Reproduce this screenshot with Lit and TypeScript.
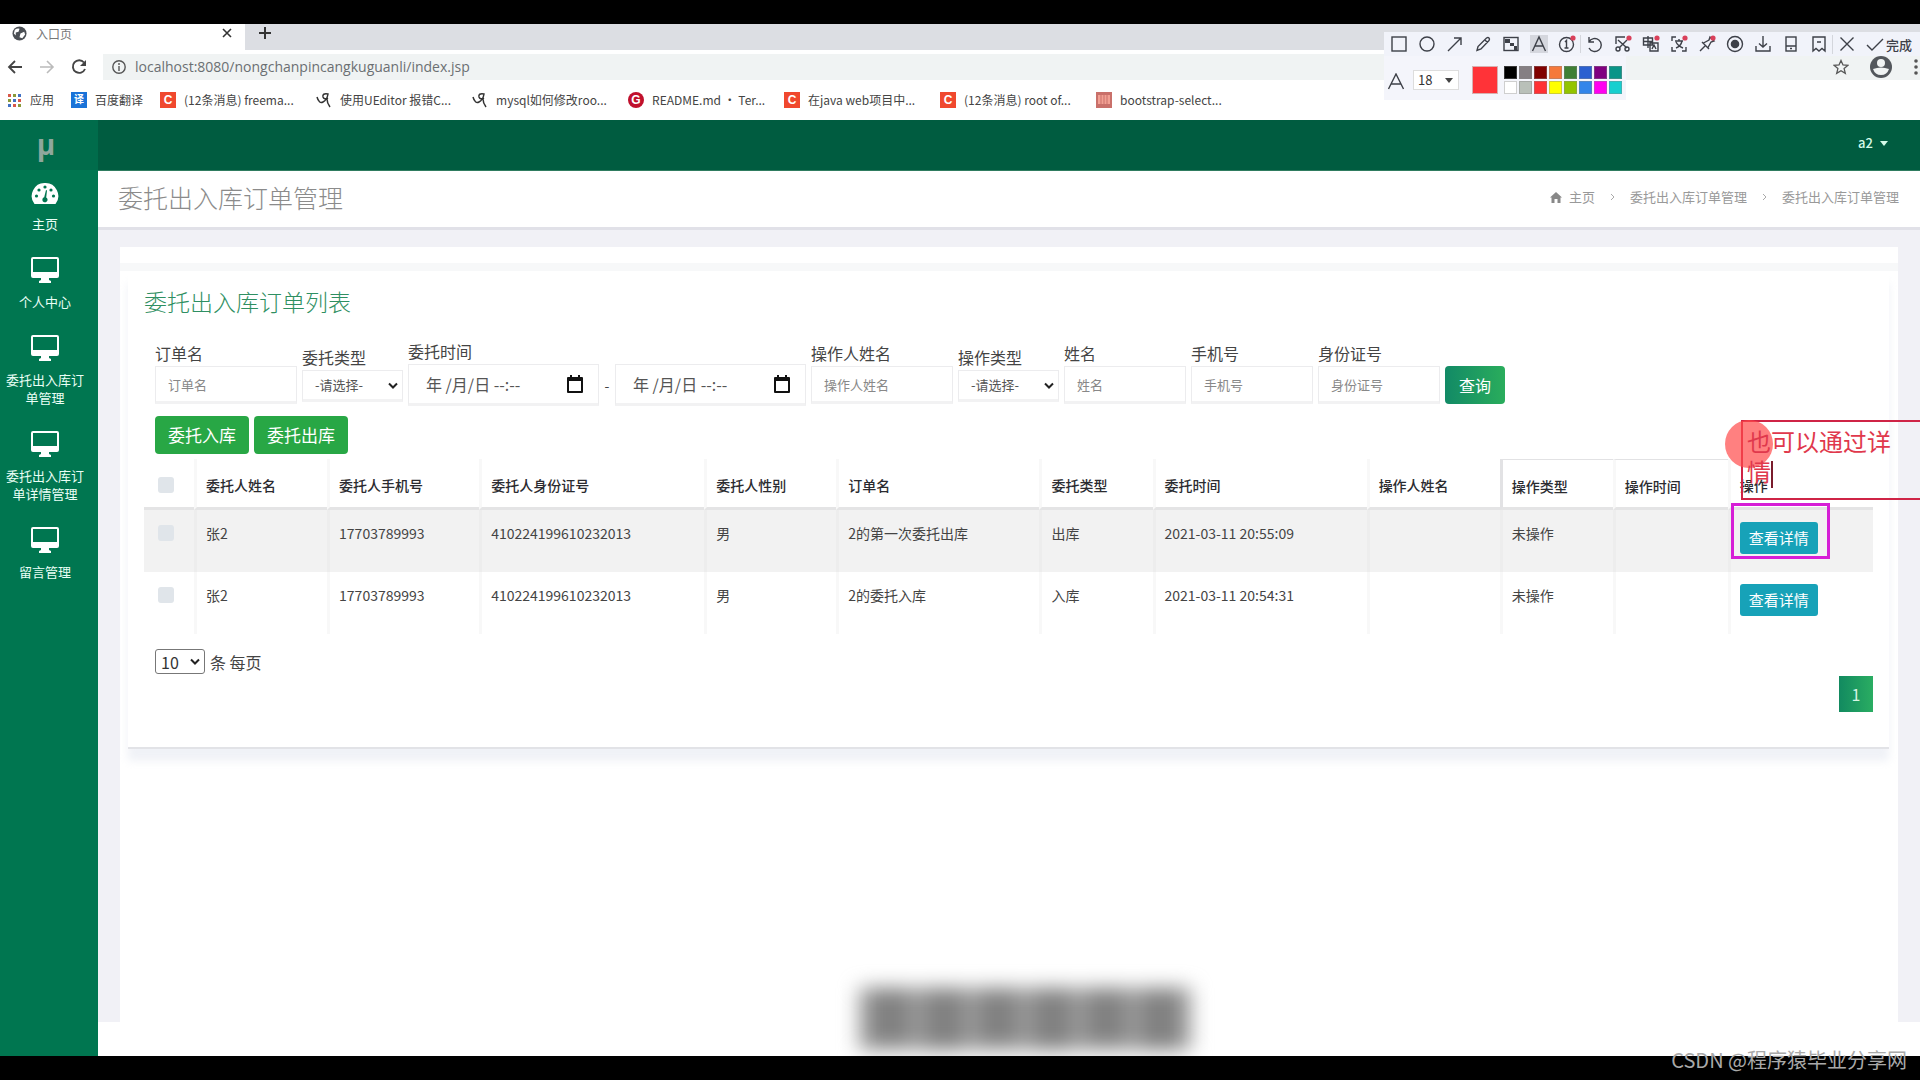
import { LitElement, html, css, svg, nothing } from "lit";
import { customElement } from "lit/decorators.js";
import { classMap } from "lit/directives/class-map.js";

const stroke = (body: unknown, cls = "ico") =>
  html`<svg class=${cls} viewBox="0 0 18 18" fill="none" stroke="currentColor" stroke-width="1.4" aria-hidden="true">${body}</svg>`;
const dot = svg`<circle cx="15" cy="3" r="2.6" fill="#d9405a" stroke="none"/>`;

const drawTools = [
  { name: "矩形", body: svg`<rect x="2" y="2" width="14" height="14"/>` },
  { name: "椭圆", body: svg`<circle cx="9" cy="9" r="7"/>` },
  { name: "箭头", body: svg`<path d="M2 16 15 3M8 3h7v7"/>` },
  { name: "画笔", body: svg`<path d="M3 15.500l1-4L12.500 3q1.500-1 2.500 0t0 2.500L7 14zM11 5l2.500 2.500"/>` },
  { name: "马赛克", body: svg`<rect x="2" y="2.500" width="14" height="13"/><path d="M3 4h5v4H3zM8 8h4v3H8zM12 11h3v4h-3z" fill="currentColor" stroke="none"/>` },
  { name: "文字", on: true, body: svg`<path d="M2.500 16 9 2l6.500 14M5 11h8"/>` },
  { name: "序号", body: svg`<circle cx="8.500" cy="9.500" r="7"/><path d="M7 7l1.500-1.500V13M6.500 13h4"/>${dot}` },
];
const editTools = [
  { name: "撤销", body: svg`<path d="M3 2v5h5M3 7a6.500 6.500 0 1 1 0 6"/>` },
  { name: "裁剪", body: svg`<path d="M2 9V2h9M4 5l9 8M13 5l-8 8"/><circle cx="4" cy="14" r="2"/><circle cx="13" cy="14" r="2"/>${dot}` },
  { name: "翻译", body: svg`<path d="M1.500 3h9v7h-9zM1.500 6.500h9M6 1v12M8 8h8v8H8zM10 14l2-4 2 4"/>${dot}` },
  { name: "文字识别", body: svg`<path d="M2 6V2h4M2 12v4h4M16 12v4h-4M5 6h8M9 4v2M6 13q5-2 6-7M6 7q2 4 7 6"/>${dot}` },
  { name: "钉住", body: svg`<path d="M2 16l5-5M4 7l7 7M5.500 8 11 5l1-3 4 4-3 1-3 5.500"/>${dot}` },
  { name: "录制", body: svg`<circle cx="9" cy="9" r="7.500"/><circle cx="9" cy="9" r="3.600" fill="currentColor"/>` },
  { name: "保存", body: svg`<path d="M9 1v11M5 8.500 9 12l4-3.500M2 11v5h14v-5"/>` },
  { name: "手机", body: svg`<rect x="4" y="2" width="10" height="14"/><path d="M4 11h10M8 13.500h2"/>` },
  { name: "收藏", body: svg`<path d="M3 2h12v14l-3-2.500L9 16l-3-2.500L3 16zM7 7h4"/>` },
];
const palette = [
  "#000000", "#857f83", "#800000", "#f5793b", "#3f7f35", "#2b5fd0", "#800080", "#0a9488",
  "#ffffff", "#b9c0b9", "#ff3034", "#ffff00", "#93c400", "#3385ea", "#ff00f0", "#17cfcf",
];

const bookmarks = [
  { kind: "apps", mark: "", text: "应用" },
  { kind: "blue", mark: "译", text: "百度翻译" },
  { kind: "csdn", mark: "C", text: "(12条消息) freema..." },
  { kind: "plain", mark: "", text: "使用UEditor 报错C..." },
  { kind: "plain", mark: "", text: "mysql如何修改roo..." },
  { kind: "gitee", mark: "G", text: "README.md · Ter..." },
  { kind: "csdn", mark: "C", text: "在java web项目中..." },
  { kind: "csdn", mark: "C", text: "(12条消息) root of..." },
  { kind: "book", mark: "", text: "bootstrap-select..." },
];

const menu = ["个人中心", "委托出入库订单管理", "委托出入库订单详情管理", "留言管理"];

const columns = [
  { title: "", w: 50 },
  { title: "委托人姓名", w: 133 },
  { title: "委托人手机号", w: 152 },
  { title: "委托人身份证号", w: 225 },
  { title: "委托人性别", w: 132 },
  { title: "订单名", w: 203 },
  { title: "委托类型", w: 113 },
  { title: "委托时间", w: 214 },
  { title: "操作人姓名", w: 133 },
  { title: "操作类型", w: 113 },
  { title: "操作时间", w: 115 },
  { title: "操作", w: 145 },
];
const totalWidth = columns.reduce((sum, c) => sum + c.w, 0);
const rows = [
  ["张2", "17703789993", "410224199610232013", "男", "2的第一次委托出库", "出库", "2021-03-11 20:55:09", "", "未操作", ""],
  ["张2", "17703789993", "410224199610232013", "男", "2的委托入库", "入库", "2021-03-11 20:54:31", "", "未操作", ""],
];

@customElement("browser-chrome")
class BrowserChrome extends LitElement {
  static styles = css`
    :host { display: block; height: 96px; background: #fff; color: #444; font-size: 12px; }
    a { color: inherit; text-decoration: none; }
    button { border: 0; padding: 0; background: none; color: inherit; font: inherit; display: flex; }
    svg { display: block; }
    .tabs { display: flex; height: 26px; background: #dcdee3; }
    .tab { display: flex; align-items: center; gap: 9px; width: 245px; box-sizing: border-box; padding: 0 13px 8px 12px; background: #fff; color: #777; }
    .tab span { flex: 1; }
    .plus { align-items: center; padding: 0 14px 8px; color: #333; }
    .address { display: flex; align-items: center; height: 30px; padding: 2px 0 0 7px; gap: 16px; }
    .omni { flex: 1; display: flex; align-items: center; gap: 9px; height: 26px; padding: 0 0 0 9px; background: #f0f3f3; }
    .omni input { flex: 1; border: 0; padding: 0; outline: 0; background: none; font: 14px/20px "Open Sans", "Noto Sans CJK SC", sans-serif; color: #6b6f72; }
    .right { display: flex; align-items: center; gap: 20px; color: #555; }
    .dim { color: #bbb; }
    .marks { display: flex; gap: 17px; height: 36px; align-items: center; padding: 0 6px; }
    .mark { display: flex; align-items: center; gap: 8px; white-space: nowrap; line-height: 20px; }
    .mark:nth-child(n + 3) span { width: 115px; }
    .badge { width: 16px; height: 16px; font: bold 12px/16px "Liberation Sans", "Noto Sans CJK SC", sans-serif; text-align: center; color: #fff; }
    .blue { background: #1a73d8; font-size: 10px; }
    .csdn { background: #f0482e; }
    .gitee { background: #c0102c; border-radius: 50%; }
  `;
  private icon(b: { kind: string; mark: string }) {
    if (b.kind === "apps")
      return html`<svg width="16" height="16" viewBox="0 0 16 16">${[2, 7, 12].map((y, r) => [2, 7, 12].map((x, c) => svg`<rect x=${x} y=${y} width="3" height="3" fill=${["#d9584a", "#8a9a3a", "#4272c4"][(r + c) % 3]}/>`))}</svg>`;
    if (b.kind === "plain")
      return html`<svg width="16" height="16" viewBox="0 0 16 16" fill="none" stroke="#333" stroke-width="1.5"><path d="M1 5q2 7 6 5 4-2 5-8-6-1-5 3 1 3 5 1M11 7q0 4 3 8"/></svg>`;
    if (b.kind === "book")
      return html`<svg width="16" height="16" viewBox="0 0 16 16"><rect width="16" height="16" fill="#c9706a"/><path d="M2 3h12v9H2z" fill="#f2a093"/><path d="M5 3v9M8 3v9M11 3v9" stroke="#c9706a"/></svg>`;
    return html`<b class="badge ${b.kind}">${b.mark}</b>`;
  }
  render() {
    return html`
      <div class="tabs">
        <div class="tab">
          <svg width="15" height="15" viewBox="0 0 16 16"><circle cx="8" cy="8" r="7.500" fill="#4b4f54"/><path d="M3 4q3-2 5-1l-1 3-3 1v3L2 8zM9 8l4-2 1 3-3 4-3-1z" fill="#fff"/></svg>
          <span>入口页</span>
          <button aria-label="关闭标签页"><svg width="10" height="10" viewBox="0 0 10 10" stroke="#333" stroke-width="1.600"><path d="M1 1l8 8M9 1 1 9"/></svg></button>
        </div>
        <button class="plus" aria-label="新标签页"><svg width="12" height="12" viewBox="0 0 12 12" stroke="currentColor" stroke-width="2"><path d="M6 0v12M0 6h12"/></svg></button>
      </div>
      <div class="address">
        <button aria-label="后退"><svg width="16" height="16" viewBox="0 0 16 16" fill="none" stroke="#444" stroke-width="1.800"><path d="M15 8H2M8 2 2 8l6 6"/></svg></button>
        <button class="dim" aria-label="前进"><svg width="16" height="16" viewBox="0 0 16 16" fill="none" stroke="currentColor" stroke-width="1.600"><path d="M1 8h13M8 2l6 6-6 6"/></svg></button>
        <button aria-label="刷新"><svg width="16" height="16" viewBox="0 0 16 16" fill="none" stroke="#444" stroke-width="1.900"><path d="M14 10a6.300 6.300 0 1 1-1-6.500"/><path d="M15 1v6H9z" fill="#444" stroke="none"/></svg></button>
        <div class="omni">
          <svg width="14" height="14" viewBox="0 0 14 14" fill="none" stroke="#555" stroke-width="1.400"><circle cx="7" cy="7" r="6.200"/><path d="M7 6v5M7 3v2"/></svg>
          <input aria-label="网址" value="localhost:8080/nongchanpincangkuguanli/index.jsp" />
          <div class="right">
            <button aria-label="收藏此页"><svg width="16" height="16" viewBox="0 0 16 16" fill="none" stroke="#555" stroke-width="1.300"><path d="M8 1.500l2 4.500 4.800.4-3.700 3.200 1.200 4.800L8 11.800l-4.300 2.600 1.200-4.800L1.200 6.400 6 6z"/></svg></button>
            <button aria-label="用户"><svg width="24" height="24" viewBox="0 0 24 24"><circle cx="12" cy="12" r="11" fill="#53575c"/><circle cx="12" cy="8" r="4" fill="#f0f3f3"/><path d="M4 14q8-3 16 0-2 6-8 6t-8-6z" fill="#f0f3f3"/></svg></button>
            <button aria-label="菜单"><svg width="7" height="18" viewBox="0 0 7 18" fill="#555"><circle cx="3" cy="3" r="1.800"/><circle cx="3" cy="9" r="1.800"/><circle cx="3" cy="15" r="1.800"/></svg></button>
          </div>
        </div>
      </div>
      <nav class="marks">
        ${bookmarks.map((b) => html`<a class="mark" href="#">${this.icon(b)}<span>${b.text}</span></a>`)}
      </nav>`;
  }
}

@customElement("capture-toolbar")
class CaptureToolbar extends LitElement {
  static styles = css`
    :host { display: block; color: #3d4048; font-size: 13px; }
    button { border: 0; padding: 0; background: none; color: inherit; font: inherit; display: flex; align-items: center; gap: 2px; }
    .ico { display: block; width: 18px; height: 18px; }
    .on { background: #d5d7de; }
    .done { font-weight: 500; }
    .top { display: flex; align-items: center; height: 24px; padding: 0 7px 0 6px; background: #f1f3fa; }
    .group { display: flex; gap: 10px; }
    .group + .group { border-left: 1px solid #d4d6dc; margin-left: 4px; padding-left: 5px; }
    .bottom { display: flex; align-items: center; width: 242px; height: 44px; box-sizing: border-box; padding: 4px 4px 0 3px; background: #f4f5fb; }
    .letter { margin-top: 3px; }
    select { appearance: none; width: 46px; height: 20px; border: 1px solid #ddd; margin: 0 13px 0 8px; padding: 0 4px; font: 13px/18px "Noto Sans CJK SC", sans-serif; color: #333; background: #fff; }
    .size { display: flex; align-items: center; position: relative; }
    .size svg { position: absolute; right: 19px; pointer-events: none; }
    .current { width: 26px; height: 28px; box-sizing: border-box; background: #ff3338; border: 1px solid #d8b0b0; margin-right: 6px; }
    .palette { display: grid; grid-template-columns: repeat(8, 13px); gap: 2px; }
    .swatch { width: 13px; height: 13px; border: 1px solid #8886; box-sizing: border-box; }
  `;
  render() {
    const tool = (t: any) => html`<button aria-label=${t.name} class=${classMap({ on: !!t.on })}>${stroke(t.body)}</button>`;
    return html`
      <div class="top">
        <div class="group">${drawTools.map(tool)}</div>
        <div class="group">${editTools.map(tool)}</div>
        <div class="group">
          ${tool({ name: "取消", body: svg`<path d="M2.500 2.500l13 13M15.500 2.500l-13 13"/>` })}
          <button class="done">${stroke(svg`<path d="M1 10l5 5L17 4"/>`)}完成</button>
        </div>
      </div>
      <div class="bottom">
        ${stroke(svg`<path d="M1.500 16 9 1l7.500 15M4.500 11h9"/>`, "ico letter")}
        <div class="size">
          <select aria-label="字号"><option>18</option></select>
          <svg width="8" height="5" viewBox="0 0 10 6"><path d="M0 0h10L5 6z" fill="#444"/></svg>
        </div>
        <button class="current" aria-label="当前颜色"></button>
        <div class="palette">${palette.map((c) => html`<button class="swatch" aria-label=${c} style="background:${c}"></button>`)}</div>
      </div>`;
  }
}

@customElement("side-menu")
class SideMenu extends LitElement {
  static styles = css`
    :host { display: block; width: 98px; flex: none; background: #007650; color: #fff; }
    .logo { height: 50px; box-sizing: border-box; padding-right: 6px; background: #006c4b; color: #8fa79c; text-align: center; font: bold 28px/48px "Open Sans", sans-serif; }
    nav { display: flex; flex-direction: column; gap: 24px; padding: 13px 10px 0 2px; }
    a { display: flex; flex-direction: column; align-items: center; gap: 10px; color: #eafff6; text-decoration: none; font-size: 13px; line-height: 18px; text-align: center; }
    svg { display: block; }
  `;
  render() {
    return html`
      <div class="logo">μ</div>
      <nav>
        <a href="#">
          <svg width="28" height="22" viewBox="0 0 28 22"><path d="M14 0A13 13 0 0 0 3.500 21h21A13 13 0 0 0 14 0z" fill="#fff"/><g fill="#007650"><circle cx="5.500" cy="13" r="1.600"/><circle cx="8" cy="7" r="1.600"/><circle cx="14" cy="4" r="1.600"/><circle cx="20" cy="7" r="1.600"/><circle cx="22.500" cy="13" r="1.600"/><path d="M15 7l1 .5-.8 7a2.600 2.600 0 1 1-2-.2z"/></g></svg>
          主页
        </a>
        ${menu.map((m) => html`<a href="#">
          <svg width="28" height="26" viewBox="0 0 28 26"><path d="M0 2q0-2 2-2h24q2 0 2 2v17q0 2-2 2h-8v2l2 1v2H8v-2l2-1v-2H2q-2 0-2-2zM2 2v13h24V2z" fill="#fff" fill-rule="evenodd"/></svg>
          ${m}</a>`)}
      </nav>`;
  }
}

@customElement("order-panel")
class OrderPanel extends LitElement {
  static styles = css`
    :host { display: block; background: #fff; margin: 0 9px 0 8px; padding: 14px 16px 35px; border-bottom: 2px solid #e2e3e7; box-shadow: 0 12px 8px #e6eaf299; }
    h2 { margin: 0; font-weight: 300; font-size: 23px; line-height: 32px; color: #2f8f62; }
    label { display: block; font-size: 16px; line-height: 24px; }
    form { display: flex; align-items: flex-end; flex-wrap: wrap; margin-top: 22px; padding: 0 11px; color: #444; }
    .field { margin: 0 5px 3px 0; }
    .field label { margin-bottom: 1px; }
    .field.pick { margin-bottom: 5px; }
    .field.time { margin-bottom: 1px; }
    .text, .pick select, .when { box-sizing: border-box; border: 1px solid #ececee; border-bottom: 3px solid #f2f2f3; background: #fff; }
    .text { display: block; width: 122px; height: 38px; padding: 0 12px; font: 13px/20px "Noto Sans CJK SC", sans-serif; color: #777; }
    .wide { width: 142px; }
    .text::placeholder { color: #888; }
    select { appearance: none; font: 13px/20px "Noto Sans CJK SC", sans-serif; color: #555; }
    .box { position: relative; display: flex; align-items: center; }
    .box svg { position: absolute; right: 5px; pointer-events: none; }
    .pick select { width: 101px; height: 32px; padding: 0 12px; }
    .range { display: flex; align-items: center; }
    .when { display: flex; align-items: center; width: 191px; height: 42px; padding: 0 15px 0 17px; }
    .when input { flex: 1; min-width: 0; border: 0; padding: 0; background: none; font: 16px/20px "Noto Sans CJK SC", sans-serif; color: #555; }
    .when button { border: 0; background: none; padding: 0; display: flex; }
    .range i { width: 16px; text-align: center; font-style: normal; font-size: 14px; }
    .search { width: 60px; height: 38px; margin-bottom: 3px; border: 0; border-radius: 4px; color: #fff; font: 16px/24px "Noto Sans CJK SC", sans-serif; background: linear-gradient(90deg, #128a66, #2aad5c); padding: 0; }
    .actions { display: flex; gap: 5px; padding: 9px 11px 5px; }
    .actions button { height: 38px; padding: 0 13px; border: 0; border-radius: 4px; background: #28a745; color: #fff; font: 17px/24px "Noto Sans CJK SC", sans-serif; }
    table { width: 100%; table-layout: fixed; border-collapse: separate; border-spacing: 0; font-size: 14px; line-height: 22px; color: #444; }
    th, td { text-align: left; padding: 0 0 0 9px; border-left: 3px solid #f8f8f8; white-space: nowrap; }
    th:first-child, td:first-child { border-left: 0; padding-left: 14px; }
    th { height: 51px; padding-top: 4px; box-sizing: border-box; border-bottom: 3px solid #e4e4e5; color: #2b2b30; font-weight: 500; }
    th.edge { border-top: 1px solid #e2e2e4; }
    th.first { border-left-color: #e2e2e4; }
    td { height: 62px; box-sizing: border-box; padding-top: 12px; vertical-align: top; }
    tbody tr:nth-child(odd) td { background: #f2f2f2; border-left-color: #ededed; }
    input[type="checkbox"] { appearance: none; display: block; width: 16px; height: 16px; margin: 3px 0; background: #e0e5ea; border-radius: 3px; }
    .detail { display: block; height: 32px; padding: 0 9px; border: 0; border-radius: 3px; background: #17a2b8; color: #fff; font: 15px/22px "Noto Sans CJK SC", sans-serif; }
    .size { display: flex; align-items: center; gap: 5px; padding: 15px 11px 0; font-size: 16px; line-height: 24px; color: #444; }
    .size select { width: 50px; height: 25px; border: 1px solid #777; border-radius: 3px; padding: 0 5px; background: #fff; font-size: 16px; color: #333; }
    .pages { display: flex; justify-content: flex-end; padding-top: 2px; }
    .pages button { width: 34px; height: 36px; border: 0; color: #d8f5e4; font: 16px/24px "Noto Sans CJK SC", sans-serif; background: linear-gradient(90deg, #128a60, #2aad62); padding: 0; }
  `;
  private chevron = () => html`<svg width="10" height="8" viewBox="0 0 10 8" fill="none" stroke="#222" stroke-width="2"><path d="M1 1.500l4 4 4-4"/></svg>`;
  private text(id: string, name: string, wide = false) {
    return html`<div class="field"><label for=${id}>${name}</label><input id=${id} class=${classMap({ text: true, wide })} placeholder=${name} /></div>`;
  }
  private pick(id: string, name: string) {
    return html`<div class="field pick"><label for=${id}>${name}</label><div class="box"><select id=${id}><option>-请选择-</option></select>${this.chevron()}</div></div>`;
  }
  private when(id: string, name: string) {
    return html`<div class="when"><input id=${id} aria-label=${name} value="年 /月/日 --:--" />
      <button type="button" aria-label="选择日期"><svg width="16" height="18" viewBox="0 0 16 18"><path d="M0 3q0-1 1-1h2V0h2v2h6V0h2v2h2q1 0 1 1v14q0 1-1 1H1q-1 0-1-1zM2 6v10h12V6z" fill="#111" fill-rule="evenodd"/></svg></button></div>`;
  }
  render() {
    return html`
      <h2>委托出入库订单列表</h2>
      <form>
        ${this.text("order", "订单名", true)}
        ${this.pick("kind", "委托类型")}
        <div class="field time"><label for="from">委托时间</label>
          <div class="range">${this.when("from", "开始时间")}<i>-</i>${this.when("to", "结束时间")}</div></div>
        ${this.text("operator", "操作人姓名", true)}
        ${this.pick("op", "操作类型")}
        ${this.text("name", "姓名")}
        ${this.text("phone", "手机号")}
        ${this.text("idno", "身份证号")}
        <button type="button" class="search">查询</button>
      </form>
      <div class="actions"><button>委托入库</button><button>委托出库</button></div>
      <table>
        <colgroup>${columns.map((c) => html`<col style="width:${(c.w / totalWidth) * 100}%" />`)}</colgroup>
        <thead><tr>${columns.map((c, i) => html`<th class=${classMap({ edge: i === 9 || i === 10, first: i === 9 })}>${i ? c.title : html`<input type="checkbox" aria-label="全选" />`}</th>`)}</tr></thead>
        <tbody>${rows.map((r) => html`<tr>
          <td><input type="checkbox" aria-label="选择此行" /></td>
          ${r.map((v) => html`<td>${v || nothing}</td>`)}
          <td><button class="detail">查看详情</button></td></tr>`)}</tbody>
      </table>
      <div class="size"><div class="box"><select id="size"><option>10</option></select>${this.chevron()}</div><label for="size">条 每页</label></div>
      <div class="pages"><button>1</button></div>`;
  }
}

@customElement("app-root")
class AppRoot extends LitElement {
  static styles = css`
    :host { display: flex; flex-direction: column; position: relative; min-height: 100vh; overflow: hidden; background: #fff; font-family: "Noto Sans CJK SC", sans-serif; }
    .band { height: 24px; background: #000; flex: none; position: relative; z-index: 2; }
    .app { flex: 1; display: flex; }
    .main { flex: 1; min-width: 0; display: flex; flex-direction: column; }
    .bar { display: flex; align-items: center; justify-content: flex-end; height: 51px; box-sizing: border-box; padding: 0 32px 4px 0; background: #005c40; border-bottom: 1px solid #2f7c60; }
    .bar button { display: flex; align-items: center; gap: 7px; border: 0; padding: 0; background: none; color: #d5fbe9; font: 500 13px/20px "Noto Sans CJK SC", sans-serif; }
    .head { display: flex; align-items: center; justify-content: space-between; height: 59px; box-sizing: border-box; padding: 0 21px 4px 20px; border-bottom: 3px solid #e1e1e8; }
    h1 { margin: 0; font-weight: 300; font-size: 25px; line-height: 36px; color: #8b8b8b; }
    .crumbs { display: flex; align-items: center; gap: 15px; font-size: 13px; line-height: 20px; color: #999; }
    .crumbs a { display: flex; align-items: center; gap: 7px; color: inherit; text-decoration: none; }
    .body { flex: 1; padding: 17px 22px 0; background: #f1f1f6; margin-bottom: 34px; display: flex; flex-direction: column; }
    .sheet { flex: 1; background: #fff; }
    .lead { height: 16px; border-bottom: 8px solid #f7f8f9; }
    capture-toolbar { position: absolute; top: 32px; right: 0; width: 536px; }
    .ring { position: absolute; left: 1731px; top: 503px; width: 93px; height: 50px; border: 3px solid #d61fd6; pointer-events: none; }
    .note { position: absolute; z-index: 1; left: 1741px; top: 420px; right: -2px; height: 72px; border: 2px solid #cf2446; padding: 4px 20px 0 4px; color: #e0384c; font-size: 24px; line-height: 30px; pointer-events: none; }
    .note::before { content: ""; position: absolute; left: -18px; top: -2px; width: 48px; height: 48px; border-radius: 50%; background: #ff4a4ab3; z-index: -1; }
    .caret { display: inline-block; width: 2px; height: 27px; background: #7a1c2c; vertical-align: middle; }
    .caption { position: absolute; left: 50%; bottom: 30px; transform: translateX(-50%); margin-left: 65px; display: flex; align-items: flex-start; padding: 0 4px; background: #999; filter: blur(10px); }
    .caption i { width: 34px; height: 56px; margin: 0 10px; background: #808080; }
    .caption i:nth-child(even) { height: 62px; }
    .mark { position: absolute; right: 13px; bottom: 5px; z-index: 3; font-size: 20px; line-height: 30px; color: #a9a9a9; }
  `;
  render() {
    const sep = html`<svg width="5" height="8" viewBox="0 0 5 8" fill="none" stroke="#aaa"><path d="M1 1l3 3-3 3"/></svg>`;
    return html`
      <div class="band"></div>
      <browser-chrome></browser-chrome>
      <div class="app">
        <side-menu></side-menu>
        <div class="main">
          <header class="bar"><button>a2 <svg width="8" height="5" viewBox="0 0 8 5"><path d="M0 0h8L4 5z" fill="#d5fbe9"/></svg></button></header>
          <div class="head">
            <h1>委托出入库订单管理</h1>
            <nav class="crumbs">
              <a href="#"><svg width="12" height="11" viewBox="0 0 12 11"><path d="M6 0l6 5.500h-1.500V11h-3V7h-3v4h-3V5.500H0z" fill="#888"/></svg>主页</a>${sep}
              <a href="#">委托出入库订单管理</a>${sep}<a href="#">委托出入库订单管理</a>
            </nav>
          </div>
          <div class="body"><div class="sheet"><div class="lead"></div><order-panel></order-panel></div></div>
        </div>
      </div>
      <div class="caption"><i></i><i></i><i></i><i></i><i></i><i></i></div>
      <div class="band"></div>
      <capture-toolbar></capture-toolbar>
      <div class="ring"></div>
      <div class="note">也可以通过详情<span class="caret"></span></div>
      <div class="mark">CSDN @程序猿毕业分享网</div>`;
  }
}
